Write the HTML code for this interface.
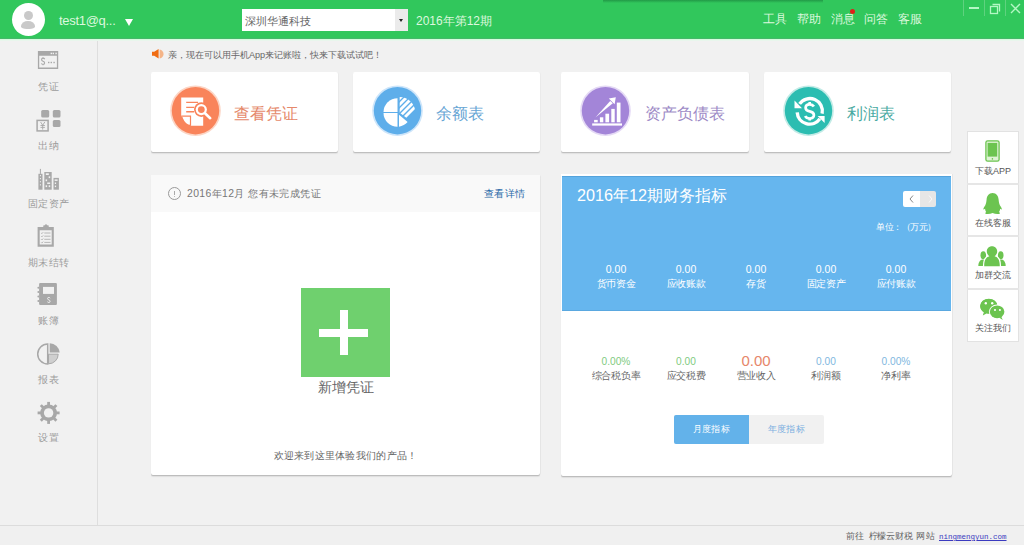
<!DOCTYPE html>
<html><head><meta charset="utf-8">
<style>
*{margin:0;padding:0;box-sizing:border-box}
html,body{width:1024px;height:545px;overflow:hidden;background:#f1f1f1;font-family:"Liberation Sans",sans-serif;position:relative}
.a{position:absolute}
#hd{left:0;top:0;width:1024px;height:39px;background:#31c75c;border-bottom:1px solid #45b86a}
#hdline{left:0;top:39px;width:1024px;height:2px;background:linear-gradient(#d6fbdf 50%,#e8f6ec 50%)}
.wt{color:#dcf8de;font-size:12px;white-space:nowrap;line-height:14px}
#side{left:0;top:41px;width:98px;height:484px;background:#f1f1f1;border-right:1px solid #dedede}
.sl{width:97px;text-align:center;color:#9c9c9c;font-size:10.3px;line-height:12px;letter-spacing:0.3px;text-indent:0.3px}
#foot{left:0;top:525px;width:1024px;height:20px;background:#f0f0f0;border-top:1px solid #dcdcdc}
.card{background:#fff;border-radius:2px;box-shadow:0 1px 0 #bfbfbf,0 2px 1px #e0e0e0,1px 0 0 #ececec}
.ct{font-size:16px;line-height:18px;white-space:nowrap;margin-top:1px}
.circ{border-radius:50%}
.panel{background:#fff;border-radius:2px;box-shadow:0 1px 0 #bdbdbd,0 2px 1px #dedede,1px 0 0 #e6e6e6}
.num{width:70px;text-align:center;font-size:11px;line-height:12px;white-space:nowrap}
.fb{left:967px;width:52px;background:#fff;border:1px solid #e4e4e4;text-align:center;font-size:10px;color:#555}
</style></head><body>
<div id="hd" class="a"></div>
<div id="hdline" class="a"></div>
<!-- top shadow -->
<div class="a" style="left:603px;top:0;width:220px;height:3px;background:linear-gradient(#229a47,rgba(34,154,71,0))"></div>
<!-- avatar -->
<div class="a circ" style="left:12px;top:3px;width:33px;height:33px;background:#fff"></div>
<div class="a circ" style="left:23.5px;top:10.5px;width:9px;height:9px;background:#c9c9c9"></div>
<div class="a" style="left:20.5px;top:21px;width:14.6px;height:7.5px;background:#c9c9c9;border-radius:50% 50% 40% 40% / 70% 70% 30% 30%"></div>
<div class="a wt" style="left:59px;top:13px;font-size:13px;line-height:16px;letter-spacing:-0.3px">test1@q...</div>
<div class="a" style="left:125px;top:18.5px;width:0;height:0;border-left:4.5px solid transparent;border-right:4.5px solid transparent;border-top:7px solid #fff"></div>
<!-- select -->
<div class="a" style="left:242px;top:9px;width:166px;height:22px;background:#fff"></div>
<div class="a" style="left:395px;top:9px;width:13px;height:22px;background:#ebebeb"></div>
<div class="a" style="left:399px;top:19px;width:0;height:0;border-left:2.5px solid transparent;border-right:2.5px solid transparent;border-top:3px solid #222"></div>
<div class="a" style="left:245px;top:14px;font-size:11px;line-height:14px;color:#666">深圳华通科技</div>
<div class="a wt" style="left:416px;top:14px">2016年第12期</div>
<!-- right menu -->
<div class="a wt" style="left:763px;top:12px">工具</div>
<div class="a wt" style="left:797px;top:12px">帮助</div>
<div class="a wt" style="left:831px;top:12px">消息</div>
<div class="a circ" style="left:850px;top:9px;width:5px;height:5px;background:#e0201a"></div>
<div class="a wt" style="left:864px;top:12px">问答</div>
<div class="a wt" style="left:898px;top:12px">客服</div>
<!-- window controls -->
<div class="a" style="left:963px;top:0;width:1px;height:16px;background:#5fd27f"></div>
<div class="a" style="left:984px;top:0;width:1px;height:16px;background:#5fd27f"></div>
<div class="a" style="left:1005px;top:0;width:1px;height:16px;background:#5fd27f"></div>
<div class="a" style="left:969px;top:7px;width:10px;height:2px;background:#b4f7c4"></div>
<svg class="a" style="left:989px;top:2px" width="13" height="13" viewBox="0 0 13 13"><rect x="1.5" y="4.5" width="7" height="7" fill="none" stroke="#b4f7c4" stroke-width="1.3"/><path d="M3.5 2.5H10.5V9.5" fill="none" stroke="#b4f7c4" stroke-width="1.3"/></svg>
<svg class="a" style="left:1010px;top:3px" width="11" height="11" viewBox="0 0 11 11"><path d="M1 1L10 10M10 1L1 10" stroke="#b4f7c4" stroke-width="1.4"/></svg>

<!-- sidebar -->
<div id="side" class="a"></div>
<div class="a sl" style="left:0;top:81px">凭证</div>
<div class="a sl" style="left:0;top:140px">出纳</div>
<div class="a sl" style="left:0;top:198px">固定资产</div>
<div class="a sl" style="left:0;top:257px">期末结转</div>
<div class="a sl" style="left:0;top:315px">账簿</div>
<div class="a sl" style="left:0;top:374px">报表</div>
<div class="a sl" style="left:0;top:432px">设置</div>

<!-- footer -->
<div id="foot" class="a"></div>
<div class="a" style="left:845.5px;top:530px;font-size:9px;line-height:12px;color:#666;white-space:nowrap">前往</div>
<div class="a" style="left:868.5px;top:530px;font-size:9.6px;line-height:12px;color:#666;white-space:nowrap;letter-spacing:-0.2px;font-size:9px">柠檬云财税</div>
<div class="a" style="left:916.3px;top:530px;font-size:9px;line-height:12px;color:#666;white-space:nowrap;letter-spacing:0.3px">网站</div>
<div class="a" style="left:939px;top:531px;font-size:7.5px;line-height:12px;color:#3b3bc0;white-space:nowrap;font-family:'Liberation Mono',monospace;text-decoration:underline">ningmengyun.com</div>

<!-- notice -->
<svg class="a" style="left:0;top:0" width="170" height="62"><path d="M152,51.8H154.2L158.6,49V58.6L154.2,55.8H152Z" fill="#f06c12"/><path d="M159.6,49.6Q163.2,50.5 163.6,54.1Q163.2,57.7 159.6,58.6Z" fill="#f4b488"/></svg>
<div class="a" style="left:168px;top:49px;font-size:9.1px;line-height:12px;color:#666;white-space:nowrap">亲，现在可以用手机App来记账啦，快来下载试试吧！</div>

<!-- cards -->
<div class="a card" style="left:151px;top:72px;width:187px;height:80px"></div>
<div class="a card" style="left:353px;top:72px;width:187px;height:80px"></div>
<div class="a card" style="left:561px;top:72px;width:188px;height:80px"></div>
<div class="a card" style="left:764px;top:72px;width:187px;height:80px"></div>


<div class="a ct" style="left:234px;top:104px;color:#e5896b">查看凭证</div>
<div class="a ct" style="left:436px;top:104px;color:#67a5d4">余额表</div>
<div class="a ct" style="left:645px;top:104px;color:#9d8ac6">资产负债表</div>
<div class="a ct" style="left:847px;top:104px;color:#49aaa2">利润表</div>

<!-- left panel -->
<div class="a panel" style="left:151px;top:175px;width:389px;height:300px"></div>
<div class="a" style="left:151px;top:175px;width:389px;height:37px;background:#f9f9f9"></div>
<div class="a circ" style="left:167.8px;top:186.8px;width:13.4px;height:13.4px;border:1.1px solid #9a9a9a"></div><div class="a" style="left:174px;top:190.5px;width:1px;height:4px;background:#aaa"></div><div class="a" style="left:174px;top:195.5px;width:1px;height:1px;background:#bbb"></div>
<div class="a" style="left:187px;top:188px;font-size:10.4px;line-height:12px;color:#777;white-space:nowrap;letter-spacing:0.4px">2016年12月 您有未完成凭证</div>
<div class="a" style="left:484px;top:188px;font-size:10px;line-height:12px;color:#2a6aa8;white-space:nowrap;letter-spacing:0.4px">查看详情</div>
<div class="a" style="left:301px;top:288px;width:89px;height:89px;background:#6fd06e"></div>
<div class="a" style="left:319px;top:328.5px;width:48.5px;height:8px;background:#fff"></div>
<div class="a" style="left:340px;top:310px;width:8px;height:44.5px;background:#fff"></div>
<div class="a" style="left:301px;top:379px;width:89px;text-align:center;font-size:14px;line-height:16px;color:#666">新增凭证</div>
<div class="a" style="left:151px;top:450px;width:389px;text-align:center;font-size:10.3px;line-height:12px;color:#666;letter-spacing:0.28px">欢迎来到这里体验我们的产品！</div>

<!-- right panel -->
<div class="a panel" style="left:561px;top:174px;width:391px;height:302px;border-radius:0 0 2px 2px"></div>
<div class="a" style="left:562px;top:176px;width:389px;height:134.5px;background:#66b6ee;border-top:1px solid #54a3dc;border-bottom:1px solid #5aa8e0"></div>
<div class="a" style="left:577px;top:186px;font-size:16.2px;line-height:19px;color:#fff;white-space:nowrap">2016年12期财务指标</div>
<div class="a" style="left:903px;top:191px;width:17px;height:16px;background:#fff;border-radius:2px 0 0 2px"></div>
<div class="a" style="left:920px;top:191px;width:16px;height:16px;background:#e6e6e6;border-radius:0 2px 2px 0"></div><svg class="a" style="left:903px;top:191px" width="33" height="16"><path d="M10,4.5L7,8L10,11.5" fill="none" stroke="#888" stroke-width="1"/><path d="M26,4.5L29,8L26,11.5" fill="none" stroke="#fafafa" stroke-width="1"/></svg>
<div class="a" style="left:876px;top:221px;font-size:9px;line-height:12px;color:#fff;white-space:nowrap;letter-spacing:-0.5px">单位：（万元）</div>


<div class="a num" style="left:581px;top:263px;color:#fff;font-size:10.5px">0.00</div>
<div class="a num" style="left:651px;top:263px;color:#fff;font-size:10.5px">0.00</div>
<div class="a num" style="left:721px;top:263px;color:#fff;font-size:10.5px">0.00</div>
<div class="a num" style="left:791px;top:263px;color:#fff;font-size:10.5px">0.00</div>
<div class="a num" style="left:861px;top:263px;color:#fff;font-size:10.5px">0.00</div>
<div class="a num" style="left:581px;top:278px;color:#fff;font-size:10px;letter-spacing:-0.4px">货币资金</div>
<div class="a num" style="left:651px;top:278px;color:#fff;font-size:10px;letter-spacing:-0.4px">应收账款</div>
<div class="a num" style="left:721px;top:278px;color:#fff;font-size:10px;letter-spacing:-0.4px">存货</div>
<div class="a num" style="left:791px;top:278px;color:#fff;font-size:10px;letter-spacing:-0.4px">固定资产</div>
<div class="a num" style="left:861px;top:278px;color:#fff;font-size:10px;letter-spacing:-0.4px">应付账款</div>

<div class="a num" style="left:581px;top:355.5px;color:#7fcb7f;font-size:10.2px">0.00%</div>
<div class="a num" style="left:651px;top:355.5px;color:#7fcb7f;font-size:10.2px">0.00</div>
<div class="a num" style="left:721px;top:353px;color:#e6866a;font-size:15px;line-height:16px">0.00</div>
<div class="a num" style="left:791px;top:355.5px;color:#7fb8e0;font-size:10.2px">0.00</div>
<div class="a num" style="left:861px;top:355.5px;color:#7fb8e0;font-size:10.2px">0.00%</div>
<div class="a num" style="left:581px;top:370px;color:#666;font-size:10px;letter-spacing:-0.3px">综合税负率</div>
<div class="a num" style="left:651px;top:370px;color:#666;font-size:10px;letter-spacing:-0.3px">应交税费</div>
<div class="a num" style="left:721px;top:370px;color:#666;font-size:10px;letter-spacing:-0.3px">营业收入</div>
<div class="a num" style="left:791px;top:370px;color:#666;font-size:10px;letter-spacing:-0.3px">利润额</div>
<div class="a num" style="left:861px;top:370px;color:#666;font-size:10px;letter-spacing:-0.3px">净利率</div>

<div class="a" style="left:674px;top:415px;width:150px;height:29px;background:#f1f1f1;border-radius:2px"></div>
<div class="a" style="left:674px;top:415px;width:75px;height:29px;background:#63b2ea;border-radius:2px 0 0 2px"></div>
<div class="a" style="left:674px;top:423px;width:75px;text-align:center;font-size:9px;line-height:12px;color:#fff;letter-spacing:0.15px">月度指标</div>
<div class="a" style="left:749px;top:423px;width:75px;text-align:center;font-size:9px;line-height:12px;color:#7aaee0;letter-spacing:0.15px">年度指标</div>

<!-- float bar -->
<div class="a" style="left:967px;top:131px;width:52px;height:211px;background:#fff;border:1px solid #e2e2e2"></div>
<div class="a" style="left:967px;top:183px;width:52px;height:2px;background:#e6e6e6"></div>
<div class="a" style="left:967px;top:235px;width:52px;height:2px;background:#e6e6e6"></div>
<div class="a" style="left:967px;top:288px;width:52px;height:2px;background:#e6e6e6"></div>
<div class="a" style="left:967px;top:166px;width:52px;text-align:center;font-size:9px;line-height:10px;color:#555">下载APP</div>
<div class="a" style="left:967px;top:218px;width:52px;text-align:center;font-size:9px;line-height:10px;color:#555">在线客服</div>
<div class="a" style="left:967px;top:270px;width:52px;text-align:center;font-size:9px;line-height:10px;color:#555">加群交流</div>
<div class="a" style="left:967px;top:323px;width:52px;text-align:center;font-size:9px;line-height:10px;color:#555">关注我们</div>

<svg class="a" style="left:0;top:0" width="1024" height="545" viewBox="0 0 1024 545">
<!-- card icon 1: orange doc search -->
<circle cx="195.5" cy="110.7" r="25.3" fill="#fcd5c5"/>
<circle cx="195.5" cy="110.7" r="23.7" fill="#f9845b"/>
<path d="M181.2,97.5H203.2V125.8H191L181.2,116Z" fill="#fff"/>
<path d="M182.8,118H189.6V125Q185,123.5 182.8,118Z" fill="#fff"/>
<path d="M181.2,116.2L190.5,116.2V125.8" fill="none" stroke="#f9845b" stroke-width="1.2"/>
<path d="M186.2,102.4H198M186.2,107.4H194M186.2,111.8H194" stroke="#f9845b" stroke-width="1.4"/>
<circle cx="201.3" cy="109.6" r="7.3" fill="#f9845b"/>
<path d="M205,113.3L210.2,118.2" stroke="#f9845b" stroke-width="5" stroke-linecap="round"/>
<path d="M205,113.3L210.2,118.2" stroke="#fff" stroke-width="2.6" stroke-linecap="round"/>
<circle cx="201.3" cy="109.6" r="5.6" fill="#fff"/>
<circle cx="201.3" cy="109.6" r="3.4" fill="#f9845b"/>

<!-- card icon 2: blue pie -->
<circle cx="397.5" cy="110.7" r="25.3" fill="#cde5fa"/>
<circle cx="397.5" cy="110.7" r="23.7" fill="#5eaeea"/>
<path d="M397.5,112V98.3A14,14 0 0 0 383.5,112Z" fill="#fff"/>
<path d="M397.5,113H383.5A14,14 0 0 0 397.5,126.7Z" fill="#fff"/>
<path d="M399,114.8V126.7A14,14 0 0 0 407.6,122.1Z" fill="#fff"/>
<clipPath id="hw"><path d="M399.7,112.7V97.1A15.6,15.6 0 0 1 415.2,110.8A15.6,15.6 0 0 1 409.6,120.3Z"/></clipPath>
<g clip-path="url(#hw)" stroke="#fff" stroke-width="2.9">
<path d="M390,102L410,82M390,108L420,78M390,114L425,79M390,120L428,82M395,121L430,86M398,124L432,90"/>
</g>

<!-- card icon 3: purple chart -->
<circle cx="605.5" cy="110.7" r="25.3" fill="#e4d9f5"/>
<circle cx="605.5" cy="110.7" r="23.7" fill="#a385d8"/>
<rect x="592.2" y="123.4" width="29.8" height="2.2" fill="#fff"/>
<rect x="594.1" y="119.9" width="3.6" height="2.4" fill="#fff"/>
<rect x="599.9" y="117.3" width="3.4" height="5" fill="#fff"/>
<rect x="605.4" y="113.7" width="3.7" height="8.6" fill="#fff"/>
<rect x="611.3" y="108.9" width="3.4" height="13.4" fill="#fff"/>
<rect x="616.8" y="102.6" width="3.7" height="19.7" fill="#fff"/>
<path d="M595.4,117.6L610.2,100.9L612.8,103.3Z" fill="#fff"/>
<path d="M608.8,98.6L615.8,97.2L614.6,104.2Z" fill="#fff"/>

<!-- card icon 4: teal dollar -->
<circle cx="808.5" cy="110.7" r="25.3" fill="#c2ebe6"/>
<circle cx="808.5" cy="110.7" r="23.7" fill="#2cbdb1"/>
<path d="M799.6,103.9A12.5,12.5 0 0 1 822.1,113.6" fill="none" stroke="#fff" stroke-width="3.4"/>
<path d="M797.2,112.3A12.5,12.5 0 0 0 819.9,118.8" fill="none" stroke="#fff" stroke-width="3.4"/>
<path d="M794.5,100.6V108.2H802Z" fill="#fff"/>
<path d="M817.6,116.1H824.6V123Z" fill="#fff"/>
<path d="M813.9,106.5Q812.5,104.3 809.7,104.3Q805.6,104.3 805.6,107.7Q805.6,110.5 809.7,111.3Q813.9,112.1 813.9,115.1Q813.9,118.5 809.7,118.5Q806.5,118.5 805.2,116" fill="none" stroke="#fff" stroke-width="2.7"/>
<path d="M809.7,102V105M809.7,117.7V120.6" stroke="#fff" stroke-width="2.6"/>

<!-- sidebar icons -->
<g fill="#a8a8a8" stroke="none">
<!-- voucher window -->
<path d="M37.9,50.9H58.2V68.9H37.9Z M39.2,55.8V67.6H56.9V55.8Z" fill-rule="evenodd"/>
<rect x="50.6" y="52.7" width="1.4" height="1.5" fill="#f1f1f1"/>
<rect x="52.6" y="52.7" width="1.4" height="1.5" fill="#f1f1f1"/>
<rect x="55.4" y="52.7" width="1.4" height="1.5" fill="#f1f1f1"/>
<rect x="48" y="61.8" width="1.4" height="1.4"/>
<rect x="50.6" y="61.8" width="1.4" height="1.4"/>
<rect x="53.4" y="61.8" width="1.4" height="1.4"/>
</g>
<path d="M44.8,59.1Q44,58.1 43,58.1Q41.6,58.1 41.6,59.6Q41.6,60.9 43,61.3Q44.6,61.8 44.6,63Q44.6,64.4 43,64.4Q41.9,64.4 41.3,63.5M43,57.2V58.2M43,64.3V65.3" fill="none" stroke="#a8a8a8" stroke-width="1.1"/>

<!-- cashier -->
<g fill="#a8a8a8">
<rect x="41.2" y="110.1" width="8" height="7.5" rx="1.5"/>
<rect x="52.8" y="110.1" width="7.7" height="7.5" rx="1.5"/>
<rect x="52.8" y="119.9" width="7.7" height="7.2" rx="1.5"/>
</g>
<rect x="37.1" y="120.4" width="11" height="10.5" fill="none" stroke="#a8a8a8" stroke-width="1.5"/>
<path d="M40.6,122L42.7,125.2L44.8,122M40.5,125.5H44.9M40.5,127.4H44.9M42.7,125.2V129.6" fill="none" stroke="#a8a8a8" stroke-width="0.9"/>

<!-- buildings -->
<g fill="#a8a8a8">
<rect x="38.4" y="173.8" width="4.1" height="15.9"/>
<rect x="39.9" y="168.9" width="1" height="5"/>
<rect x="44.3" y="172" width="7.4" height="17.7"/>
<rect x="53.5" y="177.9" width="5.4" height="11.8"/>
</g>
<g fill="#f1f1f1">
<rect x="39.9" y="175.1" width="1.1" height="1.1"/><rect x="39.9" y="178.1" width="1.1" height="1.1"/><rect x="39.9" y="181.2" width="1.1" height="1.1"/><rect x="39.9" y="184.3" width="1.1" height="1.1"/>
<rect x="45.8" y="173.3" width="3" height="1.7"/><rect x="48.7" y="176.3" width="1.5" height="1.8"/><rect x="45.6" y="179.4" width="1.5" height="1.8"/><rect x="47.2" y="182.5" width="3" height="1.5"/><rect x="45.6" y="185.3" width="1.5" height="1.8"/><rect x="48.7" y="185.3" width="1.5" height="1.8"/>
<rect x="54.6" y="179.4" width="3" height="1.5"/><rect x="54.8" y="182.5" width="1.3" height="1.5"/><rect x="54.8" y="185.6" width="1.3" height="1.5"/>
</g>

<!-- clipboard -->
<path d="M37.6,226.9H53.8V246.7H37.6Z M39.7,230.2V244.6H51.7V230.2Z" fill="#a8a8a8" fill-rule="evenodd"/>
<path d="M43,227.8L43.5,225.3H45L45.8,224H46.2L47,225.3H48.5L49,227.8Z" fill="#a8a8a8"/>
<path d="M41.2,233L41.9,233.7L43.2,232.2M44.3,233H50.5M41.2,236.2L41.9,236.9L43.2,235.4M44.3,236.2H50.5M41.2,239.3L41.9,240L43.2,238.5M44.3,239.3H50.5M41.2,242.4L41.9,243.1L43.2,241.6M44.3,242.4H50.5" fill="none" stroke="#a8a8a8" stroke-width="0.8"/>

<!-- account book -->
<rect x="39.1" y="283.1" width="17.8" height="21.8" rx="1" fill="#a8a8a8"/>
<g fill="#a8a8a8"><circle cx="38.4" cy="287.7" r="1"/><circle cx="38.4" cy="292.1" r="1"/><circle cx="38.4" cy="296.4" r="1"/><circle cx="38.4" cy="301.1" r="1"/></g>
<rect x="43" y="286.9" width="11" height="7" fill="#f1f1f1"/>
<path d="M50.2,298.2Q49.6,297.4 48.8,297.4Q47.6,297.4 47.6,298.6Q47.6,299.6 48.8,299.9Q50.1,300.3 50.1,301.3Q50.1,302.5 48.8,302.5Q47.9,302.5 47.4,301.8" fill="none" stroke="#f1f1f1" stroke-width="1"/>

<!-- report pie -->
<path d="M47.7,344V364A10,10 0 0 1 47.7,344Z" fill="#f1f1f1" stroke="#a8a8a8" stroke-width="1.5"/>
<path d="M49.7,343.3V352.6H59.7A10,10 0 0 0 49.7,343.3Z" fill="#a8a8a8"/>
<path d="M48.5,354.2V363.8A9.6,9.6 0 0 0 58.2,354.2Z" fill="#cfcfcf" stroke="#a8a8a8" stroke-width="1"/>

<!-- gear -->
<g transform="translate(48.6,412.9)" fill="#a8a8a8">
<circle r="8.4"/>
<g id="teeth"><rect x="-1.4" y="-11" width="2.8" height="4"/><rect x="-1.4" y="7" width="2.8" height="4"/><rect x="-11" y="-1.4" width="4" height="2.8"/><rect x="7" y="-1.4" width="4" height="2.8"/></g>
<g transform="rotate(45)"><rect x="-1.4" y="-11" width="2.8" height="4"/><rect x="-1.4" y="7" width="2.8" height="4"/><rect x="-11" y="-1.4" width="4" height="2.8"/><rect x="7" y="-1.4" width="4" height="2.8"/></g>
<circle r="4.7" fill="#f1f1f1"/>
</g>

<!-- float icons -->
<rect x="985.9" y="140.8" width="13.2" height="20.4" rx="1.8" fill="#dff3d5" stroke="#6cc450" stroke-width="1.3"/>
<rect x="987.6" y="142.9" width="9.6" height="13.7" fill="#6cc450"/>
<circle cx="992.4" cy="158.9" r="0.8" fill="#6cc450"/>

<path d="M992.6,193C996.5,193 998.4,196 998.6,199.5C998.8,202 999.3,204 1000,205.5C1001,207 1001.8,208 1001.9,209.5C1001.2,209.5 1000.6,209.2 1000.1,208.8C1000,210.5 999.5,211.5 999,212C1000,212.6 1000.2,213.4 999.3,213.9C997,214.3 994.5,213.9 992.6,213C990.7,213.9 988.2,214.3 985.9,213.9C985,213.4 985.2,212.6 986.2,212C985.7,211.5 985.2,210.5 985.1,208.8C984.6,209.2 984,209.5 983.3,209.5C983.4,208 984.2,207 985.2,205.5C985.9,204 986.4,202 986.6,199.5C986.8,196 988.7,193 992.6,193Z" fill="#6cc450"/>

<g fill="#6cc450">
<ellipse cx="983.3" cy="255.2" rx="2.8" ry="3.9"/><path d="M978.3,266C978.5,261.5 980.5,259.6 983.4,259.6C986.3,259.6 988.3,261.5 988.5,266Z"/>
<ellipse cx="1000.7" cy="255.2" rx="2.8" ry="3.9"/><path d="M995.5,266C995.7,261.5 997.7,259.6 1000.6,259.6C1003.5,259.6 1005.5,261.5 1005.7,266Z"/>
<path stroke="#fff" stroke-width="2.6" paint-order="stroke" d="M992,246.3C995,246.3 997.2,248.6 997.2,251.3C997.2,253.5 996.2,255.2 994.6,256.2C998,257 999.8,260 999.8,266.2H984.2C984.2,260 986,257 989.4,256.2C987.8,255.2 986.8,253.5 986.8,251.3C986.8,248.6 989,246.3 992,246.3Z"/>
</g>

<g>
<path d="M982.8,315.5L983.8,312.3A8.6,7.3 0 1 1 986.5,313.4Z" fill="#6cc450"/>
<ellipse cx="988.8" cy="306" rx="8.6" ry="7.3" fill="#6cc450"/>
<circle cx="985.8" cy="303.2" r="1.2" fill="#fff"/><circle cx="992.2" cy="303.2" r="1.2" fill="#fff"/>
<ellipse cx="997.1" cy="311.8" rx="8.2" ry="7.2" fill="#fff"/>
<path d="M1002.8,320L1001.3,316.8L999,317.5Z" fill="#6cc450"/>
<ellipse cx="997.1" cy="311.8" rx="7.3" ry="6.4" fill="#6cc450"/>
<circle cx="995" cy="310" r="1.05" fill="#fff"/><circle cx="999.9" cy="310" r="1.05" fill="#fff"/>
</g>
</svg>
</body></html>
